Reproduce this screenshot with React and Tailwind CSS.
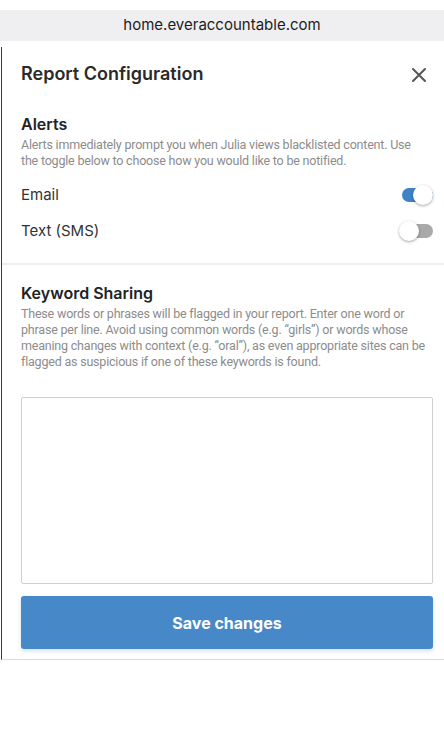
import { useState } from 'react';

const Toggle = ({ on, onChange }) => (
  <button
    onClick={onChange}
    className="relative w-[34px] h-[20px] flex items-center focus:outline-none"
  >
    <span
      className={`absolute left-[3px] right-0 h-[14px] rounded-full ${on ? 'bg-[#3f82c8]' : 'bg-[#a9a9a9]'}`}
    />
    <span
      className={`absolute top-0 w-[20px] h-[20px] rounded-full bg-white shadow-[0_1px_3px_rgba(0,0,0,0.35)] ${on ? 'right-0' : 'left-0'}`}
    />
  </button>
);

const alertLines = [
  'Alerts immediately prompt you when Julia views blacklisted content. Use',
  'the toggle below to choose how you would like to be notified.',
];

const keywordLines = [
  'These words or phrases will be flagged in your report. Enter one word or',
  'phrase per line. Avoid using common words (e.g. “girls”) or words whose',
  'meaning changes with context (e.g. “oral”), as even appropriate sites can be',
  'flagged as suspicious if one of these keywords is found.',
];

const Description = ({ lines }) => (
  <p
    className="mt-[2px] text-[12.5px] leading-[16px] tracking-[-0.2px] text-[#8c8c8c] whitespace-nowrap"
    style={{ fontFamily: "Roboto, 'Noto Sans', sans-serif" }}
  >
    {lines.map((l, i) => (
      <span key={i} className="block">{l}</span>
    ))}
  </p>
);

export default function App() {
  const [email, setEmail] = useState(true);
  const [sms, setSms] = useState(false);

  return (
    <div className="w-[444px] h-[748px] bg-white pt-[10px]" style={{ fontFamily: "Inter, 'Noto Sans', sans-serif" }}>
      {/* Browser address bar */}
      <div className="h-[31px] bg-[#efeff1] flex items-center justify-center text-[15px] text-[#1c1c1e]">
        home.everaccountable.com
      </div>

      {/* Modal panel */}
      <div className="mt-[6px] ml-px border-l border-b border-l-[#3a3a3a] border-b-[#dcdcdc]">
        {/* Header */}
        <div className="flex items-center justify-between pl-[19px] pr-[15px] pt-[15px]">
          <h1 className="text-[18px] leading-[24px] font-semibold text-[#2a2a2a]">Report Configuration</h1>
          <button className="text-[#555] p-[2px] mt-[1px]">
            <svg width="16" height="16" viewBox="0 0 16 16" fill="none" stroke="currentColor" strokeWidth="2" strokeLinecap="round">
              <path d="M2 2 L14 14 M14 2 L2 14" />
            </svg>
          </button>
        </div>

        {/* Alerts */}
        <div className="pl-[19px] pr-[11px] pt-[27px] pb-[14px] border-b-2 border-[#eeeeee]">
          <h2 className="text-[16px] leading-[22px] font-semibold text-[#222]">Alerts</h2>
          <Description lines={alertLines} />
          <div className="mt-[8px]">
            <div className="h-[36px] flex items-center justify-between text-[15px] text-[#333]">
              <span>Email</span>
              <Toggle on={email} onChange={() => setEmail(!email)} />
            </div>
            <div className="h-[36px] flex items-center justify-between text-[15px] text-[#333]">
              <span>Text (SMS)</span>
              <Toggle on={sms} onChange={() => setSms(!sms)} />
            </div>
          </div>
        </div>

        {/* Keyword Sharing */}
        <div className="pl-[19px] pr-[11px] pt-[17px] pb-[10px]">
          <h2 className="text-[16px] leading-[22px] font-semibold text-[#222]">Keyword Sharing</h2>
          <Description lines={keywordLines} />
          <textarea className="mt-[27px] block w-full h-[187px] border border-[#cfcfcf] rounded-[2px] resize-none focus:outline-none p-2 text-[14px]" />
          <button className="mt-[12px] w-full h-[53px] rounded-[3px] bg-[#4688c8] text-white text-[16px] font-bold shadow-[0_2px_4px_rgba(70,136,200,0.25)]">
            Save changes
          </button>
        </div>
      </div>
    </div>
  );
}
